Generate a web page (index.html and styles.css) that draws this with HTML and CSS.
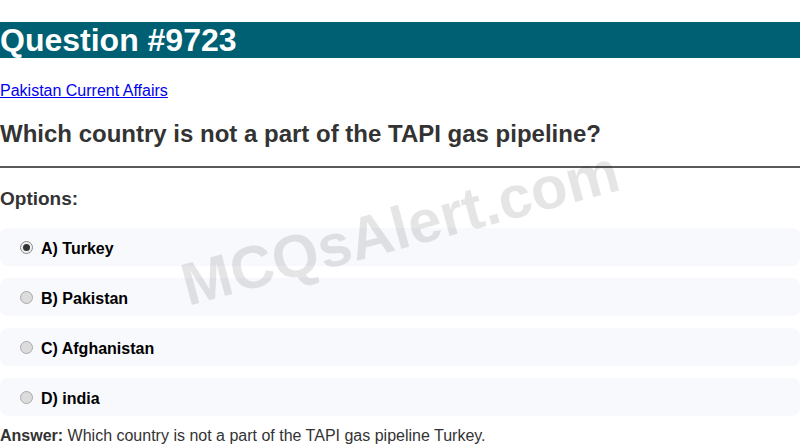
FILE: index.html
```html
<!DOCTYPE html>
<html lang="en">
<head>
<meta charset="utf-8">
<title>Question #9723</title>
<link rel="stylesheet" href="styles.css">
</head>
<body>
<div class="page">
  <h1 class="title">Question #9723</h1>
  <div class="cat"><a href="#">Pakistan Current Affairs</a></div>
  <h2 class="question">Which country is not a part of the TAPI gas pipeline?</h2>
  <hr class="rule">
  <h3 class="options-label">Options:</h3>
  <div class="options">
    <label class="option"><span class="radio checked"></span><span class="opt-text">A) Turkey</span></label>
    <label class="option"><span class="radio"></span><span class="opt-text">B) Pakistan</span></label>
    <label class="option"><span class="radio"></span><span class="opt-text">C) Afghanistan</span></label>
    <label class="option"><span class="radio"></span><span class="opt-text">D) india</span></label>
  </div>
  <p class="answer"><strong>Answer:</strong> Which country is not a part of the TAPI gas pipeline Turkey.</p>
  <div class="watermark">MCQsAlert.com</div>
</div>
</body>
</html>
```
FILE: styles.css
```css
html, body {
  margin: 0;
  padding: 0;
  background: #fff;
}
body {
  font-family: "Liberation Sans", Arial, sans-serif;
  color: #333;
}
.page {
  position: relative;
  overflow: hidden;
  height: 446px;
  display: flow-root;
}
.title {
  margin: 22px 0 24px;
  background: #006073;
  color: #fff;
  font-size: 32px;
  line-height: 36px;
  font-weight: bold;
}
.cat {
  font-size: 16px;
  line-height: 18px;
}
.cat a {
  color: #0000ee;
}
.question {
  margin: 20px 0 18px;
  font-size: 24px;
  line-height: 28px;
  font-weight: bold;
  color: #333;
}
.rule {
  margin: 0;
  border: 0;
  height: 2px;
  background: #5a5a5a;
}
.options-label {
  margin: 20px 0 18px;
  font-size: 19px;
  line-height: 22px;
  font-weight: bold;
  color: #333;
}
.options {
  display: flex;
  flex-direction: column;
  gap: 12px;
}
.option {
  display: flex;
  align-items: center;
  box-sizing: border-box;
  height: 38px;
  padding: 4px 0 0 20px;
  background: #f8f9fc;
  border-radius: 8px;
  font-size: 16px;
  font-weight: bold;
  color: #000;
}
.radio {
  width: 11px;
  height: 11px;
  border-radius: 50%;
  border: 1px solid #a9a9a9;
  background: #dcdcdc;
  margin-right: 8px;
  margin-top: -4px;
  position: relative;
  flex: none;
}
.radio.checked {
  background: #f0f0f0;
  border-color: #8a8a8a;
}
.radio.checked::after {
  content: "";
  position: absolute;
  left: 2px;
  top: 2px;
  width: 7px;
  height: 7px;
  border-radius: 50%;
  background: #333;
}
.answer {
  margin: 11px 0 0;
  font-size: 16px;
  line-height: 18px;
  color: #333;
}
.answer strong {
  color: #333;
}
.watermark {
  position: absolute;
  left: 400px;
  top: 228px;
  transform: translate(-50%, -50%) rotate(-15deg);
  font-size: 60px;
  font-weight: bold;
  color: rgba(0, 0, 0, 0.1);
  white-space: nowrap;
  pointer-events: none;
}
```
